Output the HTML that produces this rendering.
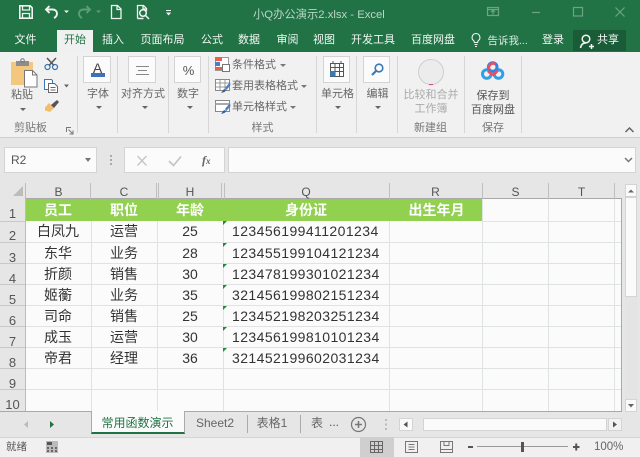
<!DOCTYPE html>
<html lang="zh"><head><meta charset="utf-8"><title>小Q办公演示2.xlsx - Excel</title>
<style>
*{box-sizing:border-box}
html,body{margin:0;padding:0}
body{width:640px;height:457px;overflow:hidden;position:relative;background:#e6e6e6;font-family:"Liberation Sans","Noto Sans CJK SC",sans-serif;font-size:12px;color:#444}
.a{position:absolute;white-space:nowrap;line-height:1}
.c{transform:translateX(-50%)}
.tab{color:#f2f7f3;font-size:11px;top:35px}
.rb{color:#666;font-size:11px}
.gl{color:#777;font-size:11px;top:123px}
.sep{position:absolute;top:56px;height:77px;width:1px;background:#d6d6d6}
.box{position:absolute;background:#fbfbfb;border:1px solid #d4d4d4}
.tri{position:absolute;width:0;height:0;border-left:3px solid transparent;border-right:3px solid transparent;border-top:3px solid #666}
.hl{position:absolute;left:26px;width:595px;height:1px;background:#dfe3e1}
.rl{position:absolute;left:0;width:25px;height:1px;background:#c8c8c8}
.vl{position:absolute;top:199px;height:212px;width:1px;background:#dfe3e1}
.ch{position:absolute;top:186px;font-size:12px;color:#555;transform:translateX(-50%);line-height:1}
.hs{position:absolute;top:183px;height:16px;width:1px;background:#bfbfbf}
.rn{position:absolute;left:0;width:25px;text-align:center;font-size:13px;color:#555;line-height:1}
.hd{position:absolute;top:203px;color:#fff;font-weight:bold;font-size:14px;transform:translateX(-50%);line-height:1}
.d{position:absolute;color:#333;font-size:14px;transform:translateX(-50%);line-height:1}
.id{position:absolute;left:232px;color:#333;font-size:14px;line-height:1;letter-spacing:.42px}
.gt{position:absolute;left:223px;width:0;height:0;border-top:4px solid #1f8a3b;border-right:4px solid transparent}
svg{position:absolute;overflow:visible}
</style></head><body>

<!-- title + tab band -->
<div class="a" style="left:0;top:0;width:640px;height:52px;background:#217346"></div>

<!-- QAT -->
<svg style="left:0;top:0" width="180" height="30" fill="none">
<path d="M19.800 5.800h10.400l2 2v10.400H19.800z" stroke="#eef5f0" stroke-width="1.600"/>
<path d="M22.500 6v4h7V6M22.500 18v-4.500h7V18" stroke="#eef5f0" stroke-width="1.300"/>
<path d="M49.500 6L46 9.500l3.500 3.500M46 9.500h7a4 4 0 0 1 4 4c0 2-1 3.500-3 4.500" stroke="#eef5f0" stroke-width="1.900"/>
<path d="M64 10.500h5L66.500 13z" fill="#eef5f0"/>
<path d="M86.500 6L90 9.500 86.500 13M90 9.500h-7a4 4 0 0 0-4 4c0 2 1 3.500 3 4.500" stroke="#5f9c7a" stroke-width="1.900"/>
<path d="M96 10.500h5L98.500 13z" fill="#5f9c7a"/>
<path d="M111.500 5.500h6l3.500 3.500v9.500h-9.500zM117 5.500V9.500h4" stroke="#eef5f0" stroke-width="1.300"/>
<path d="M137.500 18.500V5.500h6l3 3V11M143 5.500V9h3.500" stroke="#eef5f0" stroke-width="1.300"/>
<circle cx="143" cy="13" r="3.300" stroke="#eef5f0" stroke-width="1.500"/>
<path d="M145.500 15.500l3.500 3.500M137.500 18.500h6" stroke="#eef5f0" stroke-width="1.500"/>
<path d="M166 10.500h5" stroke="#eef5f0" stroke-width="1"/>
<path d="M166 12.500h5.200l-2.600 3z" fill="#eef5f0"/>
</svg>

<div class="a" style="left:253px;top:10px;color:#bcd5c6;font-size:11.300px">小Q办公演示2.xlsx - Excel</div>

<!-- window buttons -->
<svg style="left:480px;top:0" width="160" height="30" fill="none" stroke="#6fa287" stroke-width="1.200">
<rect x="7.500" y="7.500" width="11" height="8"/><path d="M7.500 9.500h11M13 14.500v-4M11 12l2-2 2 2"/>
<path d="M52 12.500h8"/>
<rect x="93.500" y="7.500" width="9" height="8.500"/>
<path d="M135.500 7.500l9 9M144.500 7.500l-9 9"/>
</svg>

<!-- tabs -->
<div class="a" style="left:57px;top:30px;width:36px;height:22px;background:#f0f0f0"></div>
<div class="a c tab" style="left:25.500px">文件</div>
<div class="a c" style="left:75px;top:35px;color:#217346;font-size:11px">开始</div>
<div class="a c tab" style="left:113px">插入</div>
<div class="a c tab" style="left:162.500px">页面布局</div>
<div class="a c tab" style="left:212px">公式</div>
<div class="a c tab" style="left:249px">数据</div>
<div class="a c tab" style="left:287.500px">审阅</div>
<div class="a c tab" style="left:324px">视图</div>
<div class="a c tab" style="left:373px">开发工具</div>
<div class="a c tab" style="left:433px">百度网盘</div>
<svg style="left:469px;top:32px" width="14" height="16" fill="none" stroke="#eef5f0" stroke-width="1.100"><path d="M7 1.500a4 4 0 0 0-2.300 7.200c.5.500.7 1 .7 1.800h3.200c0-.8.200-1.300.7-1.800A4 4 0 0 0 7 1.500zM5.500 12.500h3M6 14.500h2"/></svg>
<div class="a" style="left:487.500px;color:#dcebe2;font-size:10.500px;top:36px">告诉我...</div>
<div class="a c tab" style="left:553px">登录</div>
<div class="a" style="left:573px;top:30px;width:53px;height:21px;background:#1a5c38"></div>
<svg style="left:579px;top:33px" width="16" height="17" fill="none" stroke="#f2f7f3" stroke-width="1.500"><circle cx="7" cy="6" r="3.800"/><path d="M1.500 15c.5-3.500 2.500-5 5.500-5M10 13.500h5M12.500 11v5"/></svg>
<div class="a" style="left:597px;top:35px;color:#f7faf8;font-size:11px">共享</div>

<!-- ribbon -->
<div class="a" style="left:0;top:52px;width:640px;height:85px;background:#f1f1f1"></div>
<div class="a" style="left:0;top:137px;width:640px;height:1px;background:#cfcfcf"></div>
<div class="sep" style="left:77px"></div>
<div class="sep" style="left:117px"></div>
<div class="sep" style="left:168px"></div>
<div class="sep" style="left:208px"></div>
<div class="sep" style="left:316px"></div>
<div class="sep" style="left:356px"></div>
<div class="sep" style="left:397px"></div>
<div class="sep" style="left:464px"></div>
<div class="sep" style="left:521px"></div>

<!-- clipboard (page coords) -->
<svg style="left:0;top:0" width="76" height="120" fill="none">
<rect x="11" y="62" width="22" height="23" fill="#f4c77e"/>
<rect x="16" y="61" width="13" height="5" fill="#8d8d8d"/>
<circle cx="22.500" cy="60.500" r="1.800" stroke="#777"/>
<path d="M24.500 70.500h8l4.500 4.500v12H24.500z" fill="#fff" stroke="#777"/>
<path d="M32.500 70.500V75H37" stroke="#777"/>
<g stroke="#3c78b5" stroke-width="1.300"><circle cx="47.500" cy="67" r="2.500"/><circle cx="55" cy="67" r="2.500"/></g>
<path d="M47 58l7 7.500M56 58l-7 7.500" stroke="#555" stroke-width="1.500"/>
<path d="M44.500 79.500h7l1 1v9h-8z" fill="#fff" stroke="#3c78b5"/>
<path d="M48.500 83.500h6l3 3v6h-9z" fill="#fff" stroke="#666"/>
<path d="M50.500 87.500h5M50.500 90h5" stroke="#666"/>
<path d="M64 84.500h5l-2.500 3z" fill="#666"/>
<path d="M49 103l5 5-4 4-5-1.500 0-3z" fill="#f0bf6c"/>
<path d="M51 105l6-5 2 2-5 6z" fill="#555"/>
</svg>
<div class="a c rb" style="left:22px;top:90px">粘贴</div>
<div class="tri" style="left:20px;top:108px"></div>
<div class="a c gl" style="left:30.500px">剪贴板</div>
<svg style="left:66px;top:127px" width="8" height="8" fill="none" stroke="#777"><path d="M.5 5V.5H5M2.500 2.500L6.500 6.500M7 3.500V7H3.500"/></svg>

<!-- font -->
<div class="box" style="left:83px;top:56px;width:28px;height:27px"></div>
<div class="a c" style="left:97.500px;top:61px;font-size:14px;color:#444">A</div>
<div class="a" style="left:91px;top:73px;width:14px;height:4px;background:#3e70b5"></div>
<div class="a c rb" style="left:98px;top:89px">字体</div>
<div class="tri" style="left:96px;top:106px"></div>

<!-- align -->
<div class="box" style="left:128px;top:56px;width:28px;height:27px"></div>
<svg style="left:128px;top:56px" width="28" height="27" fill="none" stroke="#888"><path d="M8 10.500h13M10 14.500h9M8 18.500h13"/></svg>
<div class="a c rb" style="left:143px;top:89px">对齐方式</div>
<div class="tri" style="left:142px;top:106px"></div>

<!-- number -->
<div class="box" style="left:174px;top:56px;width:27px;height:27px"></div>
<div class="a c" style="left:188.500px;top:64px;font-size:13px;color:#555">%</div>
<div class="a c rb" style="left:188px;top:89px">数字</div>
<div class="tri" style="left:187px;top:106px"></div>

<!-- styles (page coords) -->
<svg style="left:0;top:0" width="232" height="120" fill="none">
<rect x="215.500" y="57.500" width="13" height="13" fill="#fff" stroke="#999"/>
<rect x="215" y="57" width="7" height="4" fill="#e8604c"/>
<rect x="215" y="62" width="5" height="4" fill="#4a7fc1"/>
<rect x="215" y="67" width="7" height="3" fill="#e8604c"/>
<rect x="222.500" y="64.500" width="7" height="7" fill="#fff" stroke="#777"/>
<rect x="215.500" y="79.500" width="14" height="11" fill="#fff" stroke="#888"/>
<path d="M220 79.500v11M225 79.500v11M215.500 83h14M215.500 87h14" stroke="#999"/>
<path d="M230 82l-5 6 1.500 2 4-5z" fill="#4a7fc1"/>
<path d="M224 89l2.500 1-2 2-3.500 1z" fill="#35628f"/>
<rect x="215.500" y="100.500" width="14" height="11" fill="#fff" stroke="#888"/>
<path d="M215.500 104h14" stroke="#aaa" stroke-width="2"/>
<path d="M230 103l-5 6 1.500 2 4-5z" fill="#4a7fc1"/>
<path d="M224 110l2.500 1-2 2-3.500 1z" fill="#35628f"/>
</svg>
<div class="a rb" style="left:232px;top:60px">条件格式</div>
<div class="tri" style="left:280px;top:64px;border-top-color:#777"></div>
<div class="a rb" style="left:232px;top:81px">套用表格格式</div>
<div class="tri" style="left:301px;top:85px;border-top-color:#777"></div>
<div class="a rb" style="left:232px;top:102px">单元格样式</div>
<div class="tri" style="left:290px;top:106px;border-top-color:#777"></div>
<div class="a c gl" style="left:262.500px">样式</div>

<!-- cells -->
<div class="box" style="left:323px;top:56px;width:27px;height:27px"></div>
<svg style="left:323px;top:56px" width="27" height="27" fill="none" stroke="#555"><path d="M7.500 7.500h13v13h-13zM7.500 11.500h13M7.500 15.500h13M12 7.500v13M16.500 7.500v13"/><rect x="7" y="15" width="5" height="5.500" fill="#3c78b5" stroke="none"/><path d="M10 5v3M18 5v3"/></svg>
<div class="a c rb" style="left:337.500px;top:89px">单元格</div>
<div class="tri" style="left:335px;top:106px"></div>

<!-- edit -->
<div class="box" style="left:363px;top:56px;width:27px;height:27px"></div>
<svg style="left:363px;top:56px" width="27" height="27" fill="none" stroke="#3c78b5"><circle cx="16" cy="12" r="3.800" stroke-width="1.600"/><path d="M13 15l-4 4" stroke-width="2.200"/></svg>
<div class="a c rb" style="left:377.500px;top:89px">编辑</div>
<div class="tri" style="left:375px;top:106px"></div>

<!-- new group -->
<svg style="left:416px;top:58px" width="30" height="30"><circle cx="15" cy="14" r="12.500" fill="#ececec" stroke="#cfcfcf" stroke-width="1"/><path d="M13 26.600h4" stroke="#d13a94" stroke-width="1"/></svg>
<div class="a c" style="left:431px;top:90px;font-size:11px;color:#aaa">比较和合并</div>
<div class="a c" style="left:431px;top:104px;font-size:11px;color:#aaa">工作簿</div>
<div class="a c gl" style="left:430.500px">新建组</div>

<!-- baidu -->
<svg style="left:480px;top:60px" width="26" height="22" fill="none">
<circle cx="6.800" cy="14" r="4.300" stroke="#2f9fe8" stroke-width="3"/>
<circle cx="18.500" cy="14" r="4.300" stroke="#2f9fe8" stroke-width="3"/>
<circle cx="12.700" cy="7" r="4.300" stroke="#2f86e0" stroke-width="3"/>
<path d="M9.300 9.500a4.300 4.300 0 0 1 6-5.500M8 11l5 4.500M18 10.500l-5 5" stroke="#ee4f5f" stroke-width="2.600"/>
</svg>
<div class="a c" style="left:493px;top:91px;font-size:11px;color:#555">保存到</div>
<div class="a c" style="left:493px;top:105px;font-size:11px;color:#555">百度网盘</div>
<div class="a c gl" style="left:493px">保存</div>

<svg style="left:624px;top:126px" width="12" height="8" fill="none" stroke="#666" stroke-width="1.500"><path d="M1.500 6l4-4 4 4"/></svg>

<!-- formula bar -->
<div class="box" style="left:4px;top:147px;width:93px;height:26px;background:#fbfbfb"></div>
<div class="a" style="left:11px;top:154px;font-size:12px;color:#555">R2</div>
<div class="tri" style="left:85px;top:158px;border-left-width:3.500px;border-right-width:3.500px;border-top-width:4px;border-top-color:#777"></div>
<svg style="left:108px;top:154px" width="6" height="14" fill="#aaa"><rect x="2" y="1" width="2" height="2"/><rect x="2" y="5" width="2" height="2"/><rect x="2" y="9" width="2" height="2"/></svg>
<div class="box" style="left:124px;top:147px;width:101px;height:26px"></div>
<svg style="left:135px;top:154px" width="80" height="14" fill="none"><path d="M2.500 2l9 9.500M11.500 2l-9 9.500" stroke="#c4c4c4" stroke-width="1.300"/><path d="M34 7l4.500 4.500 7.500-9" stroke="#c4c4c4" stroke-width="1.700"/></svg>
<div class="a" style="left:202px;top:154px;font-family:'Liberation Serif','Noto Serif CJK SC',serif;font-style:italic;font-size:12px;color:#666;font-weight:bold">f<span style="font-size:9px">x</span></div>
<div class="box" style="left:228px;top:147px;width:408px;height:26px"></div>
<svg style="left:624px;top:157px" width="10" height="7" fill="none" stroke="#777" stroke-width="1.500"><path d="M1 1l3.500 3.500L8 1"/></svg>

<!-- grid -->
<div class="a" style="left:25px;top:199px;width:596px;height:212px;background:#fbfbfb"></div>
<div class="a" style="left:25px;top:199px;width:457.500px;height:22px;background:#92d050"></div>
<div class="a" style="left:0;top:183px;width:25px;height:16px;background:#e6e6e6"></div>
<svg style="left:12px;top:185px" width="12" height="12"><path d="M11 1v10H1z" fill="#bcbcbc"/></svg>
<div class="a" style="left:25px;top:198px;width:597px;height:1px;background:#a9a9a9"></div>
<div class="a" style="left:25px;top:183px;width:1px;height:228px;background:#bbb"></div>
<div class="a" style="left:621px;top:198px;width:1px;height:214px;background:#a9a9a9"></div>
<div class="a" style="left:0;top:411px;width:622px;height:1px;background:#a9a9a9"></div>

<div class="hl" style="top:242px"></div><div class="hl" style="top:263px"></div><div class="hl" style="top:284px"></div><div class="hl" style="top:305px"></div><div class="hl" style="top:326px"></div><div class="hl" style="top:347px"></div><div class="hl" style="top:368px"></div><div class="hl" style="top:389px"></div>
<div class="hl" style="top:221px;left:482px;width:139px"></div>
<div class="rl" style="top:221px"></div><div class="rl" style="top:242px"></div><div class="rl" style="top:263px"></div><div class="rl" style="top:284px"></div><div class="rl" style="top:305px"></div><div class="rl" style="top:326px"></div><div class="rl" style="top:347px"></div><div class="rl" style="top:368px"></div><div class="rl" style="top:389px"></div>
<div class="vl" style="left:91px;top:221px;height:190px"></div><div class="vl" style="left:157px;top:221px;height:190px"></div><div class="vl" style="left:223px;top:221px;height:190px"></div><div class="vl" style="left:389px;top:221px;height:190px"></div><div class="vl" style="left:482px"></div><div class="vl" style="left:548px"></div><div class="vl" style="left:614px"></div>

<div class="hs" style="left:90px"></div><div class="hs" style="left:156px"></div><div class="hs" style="left:158px"></div><div class="hs" style="left:221px"></div><div class="hs" style="left:224px"></div><div class="hs" style="left:389px"></div><div class="hs" style="left:482px"></div><div class="hs" style="left:548px"></div><div class="hs" style="left:614px"></div>

<div class="ch" style="left:58.500px">B</div><div class="ch" style="left:124px">C</div><div class="ch" style="left:190px">H</div><div class="ch" style="left:306px">Q</div><div class="ch" style="left:435.500px">R</div><div class="ch" style="left:515.500px">S</div><div class="ch" style="left:581.500px">T</div>

<div class="rn" style="top:207px">1</div><div class="rn" style="top:229px">2</div><div class="rn" style="top:251px">3</div><div class="rn" style="top:272px">4</div><div class="rn" style="top:293px">5</div><div class="rn" style="top:314px">6</div><div class="rn" style="top:335px">7</div><div class="rn" style="top:356px">8</div><div class="rn" style="top:377px">9</div><div class="rn" style="top:398px">10</div>

<div class="hd" style="left:58px">员工</div><div class="hd" style="left:124px">职位</div><div class="hd" style="left:190px">年龄</div><div class="hd" style="left:306px">身份证</div><div class="hd" style="left:436.500px">出生年月</div>

<div class="d" style="left:58px;top:224px">白凤九</div><div class="d" style="left:124px;top:224px">运营</div><div class="d" style="left:190px;top:224px">25</div>
<div class="d" style="left:58px;top:246px">东华</div><div class="d" style="left:124px;top:246px">业务</div><div class="d" style="left:190px;top:246px">28</div>
<div class="d" style="left:58px;top:267px">折颜</div><div class="d" style="left:124px;top:267px">销售</div><div class="d" style="left:190px;top:267px">30</div>
<div class="d" style="left:58px;top:288px">姬蘅</div><div class="d" style="left:124px;top:288px">业务</div><div class="d" style="left:190px;top:288px">35</div>
<div class="d" style="left:58px;top:309px">司命</div><div class="d" style="left:124px;top:309px">销售</div><div class="d" style="left:190px;top:309px">25</div>
<div class="d" style="left:58px;top:330px">成玉</div><div class="d" style="left:124px;top:330px">运营</div><div class="d" style="left:190px;top:330px">30</div>
<div class="d" style="left:58px;top:351px">帝君</div><div class="d" style="left:124px;top:351px">经理</div><div class="d" style="left:190px;top:351px">36</div>

<div class="id" style="top:224px">123456199411201234</div>
<div class="id" style="top:246px">123455199104121234</div>
<div class="id" style="top:267px">123478199301021234</div>
<div class="id" style="top:288px">321456199802151234</div>
<div class="id" style="top:309px">123452198203251234</div>
<div class="id" style="top:330px">123456199810101234</div>
<div class="id" style="top:351px">321452199602031234</div>
<div class="gt" style="top:221px"></div><div class="gt" style="top:243px"></div><div class="gt" style="top:264px"></div><div class="gt" style="top:285px"></div><div class="gt" style="top:306px"></div><div class="gt" style="top:327px"></div><div class="gt" style="top:348px"></div>

<!-- vertical scrollbar -->
<div class="a" style="left:625px;top:184px;width:12px;height:228px;background:#e4e4e4"></div>
<div class="box" style="left:625px;top:184px;width:12px;height:13px;background:#fafafa"></div>
<div class="box" style="left:625px;top:197px;width:12px;height:100px;background:#fafafa"></div>
<div class="box" style="left:625px;top:399px;width:12px;height:13px;background:#fafafa"></div>
<svg style="left:625px;top:184px" width="12" height="228"><path d="M3 8.500h6l-3-3zM3 220l6 0-3 3.500z" fill="#666"/></svg>

<!-- sheet tabs -->
<div class="a" style="left:0;top:412px;width:640px;height:25px;background:#e6e6e6"></div>
<div class="a" style="left:91px;top:411px;width:94px;height:23px;background:#fbfbfb;border-left:1px solid #aaa;border-right:1px solid #aaa;border-bottom:2px solid #217346"></div>
<div class="a c" style="left:137.500px;top:417px;font-size:12px;color:#217346">常用函数演示</div>
<div class="a c" style="left:215px;top:417px;font-size:12px;color:#666">Sheet2</div>
<div class="a" style="left:247px;top:415px;width:1px;height:18px;background:#aaa"></div>
<div class="a c" style="left:272px;top:417px;font-size:12px;color:#666">表格1</div>
<div class="a" style="left:300px;top:415px;width:1px;height:18px;background:#aaa"></div>
<div class="a" style="left:311px;top:417px;font-size:12px;color:#666">表</div>
<div class="a" style="left:329px;top:416px;font-size:12px;color:#217346">...</div>
<svg style="left:24px;top:419px" width="32" height="12"><path d="M4 2v7L0 5.500z" fill="#bbb"/><path d="M26 2v7l4-3.500z" fill="#217346"/></svg>
<svg style="left:350px;top:416px" width="18" height="18" fill="none" stroke="#777" stroke-width="1.200"><circle cx="8.500" cy="8.500" r="7"/><path d="M5 8.500h7M8.500 5v7" stroke-width="1.500"/></svg>
<svg style="left:383px;top:419px" width="6" height="14" fill="#bbb"><rect x="2" y="0" width="2" height="2"/><rect x="2" y="4.500" width="2" height="2"/><rect x="2" y="9" width="2" height="2"/></svg>
<div class="box" style="left:399px;top:418px;width:14px;height:13px;background:#fafafa"></div>
<div class="box" style="left:423px;top:418px;width:184px;height:13px;background:#fafafa"></div>
<div class="box" style="left:608px;top:418px;width:14px;height:13px;background:#f2f2f2"></div>
<svg style="left:399px;top:418px" width="224" height="13"><path d="M8.500 3.500v6L4.500 6.500zM214 3.500v6l4-3z" fill="#555"/></svg>

<!-- status bar -->
<div class="a" style="left:0;top:437px;width:640px;height:20px;background:#f0f0f0;border-top:1px solid #d5d5d5"></div>
<div class="a" style="left:6px;top:442px;font-size:10.500px;color:#555">就绪</div>
<svg style="left:46px;top:441px" width="12" height="12"><rect width="12" height="12" fill="#bbb"/><rect x="1" y="1" width="5" height="3" fill="#555"/><path d="M1 6h2v2H1zM5 6h2v2H5zM9 6h2v2H9zM1 9h2v2H1zM5 9h2v2H5zM9 9h2v2H9z" fill="#666"/></svg>
<div class="a" style="left:360px;top:437px;width:34px;height:20px;background:#cfcfcf"></div>
<svg style="left:360px;top:437px" width="280" height="20" fill="none" stroke="#777">
<path d="M10.500 4.500h12v11h-12zM14.500 4.500v11M18.500 4.500v11M10.500 8.500h12M10.500 12.500h12" stroke="#666"/>
<path d="M45.500 4.500h12v11h-12z"/><path d="M48.500 7.500h6M48.500 10h6M48.500 12.500h6"/>
<path d="M80.500 4.500h12v11h-12zM80.500 12.500h12M84 4.500v4h5v-4"/>
<path d="M108 10h5" stroke="#555" stroke-width="2"/>
<path d="M117 9.500h91" stroke="#999"/>
<rect x="161" y="5" width="3" height="10" fill="#555" stroke="none"/>
<path d="M213 10h6.500M216.250 6.500v7" stroke="#555" stroke-width="2"/>
</svg>
<div class="a" style="left:594px;top:442px;font-size:11.500px;color:#666">100%</div>

</body></html>
